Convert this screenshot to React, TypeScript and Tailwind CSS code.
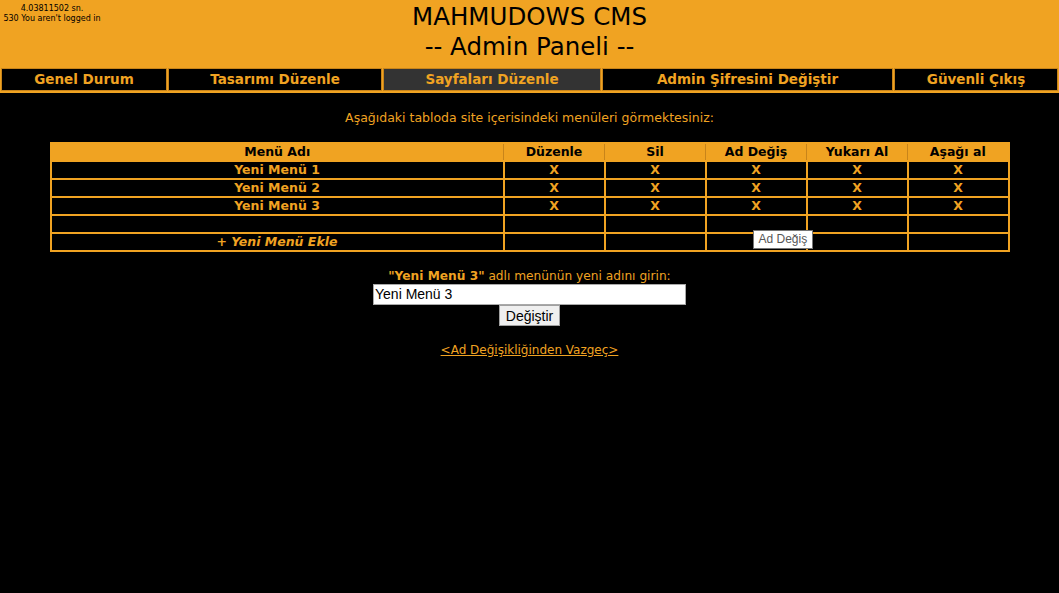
import React from 'react';

const font = "font-['DejaVu_Sans',sans-serif]";

const navItems = [
  { label: 'Genel Durum', w: 'w-[166px]' },
  { label: 'Tasarımı Düzenle', w: 'w-[214px]' },
  { label: 'Sayfaları Düzenle', w: 'w-[218px]', active: true },
  { label: 'Admin Şifresini Değiştir', w: 'w-[291px]' },
  { label: 'Güvenli Çıkış', w: 'flex-1' },
];

const menus = ['Yeni Menü 1', 'Yeni Menü 2', 'Yeni Menü 3'];
const cols = ['Düzenle', 'Sil', 'Ad Değiş', 'Yukarı Al', 'Aşağı al'];

export default function App() {
  return (
    <div className={`min-h-[593px] w-full bg-black text-[#f0a322] ${font}`}>
      {/* BAŞLIK */}
      <div className="relative bg-[#f0a322] h-[68px] text-black">
        <div className="absolute left-0 top-[4px] w-[104px] text-[8px] leading-[10px] text-center">
          <div>4.03811502 sn.</div>
          <div className="whitespace-nowrap">530 You aren't logged in</div>
        </div>
        <div className="flex flex-col items-center pt-[2px] text-[24.5px] leading-[30px]">
          <div>MAHMUDOWS CMS</div>
          <div>-- Admin Paneli --</div>
        </div>
      </div>

      {/* MENÜ */}
      <div className="flex bg-[#f0a322] px-[1px] pb-[2px] gap-[1px]">
        {navItems.map((n) => (
          <div
            key={n.label}
            className={`${n.w} h-[23px] flex items-center justify-center border border-[#c8841a] font-bold text-[13.5px] ${n.active ? 'bg-[#333333]' : 'bg-black'}`}
          >
            {n.label}
          </div>
        ))}
      </div>

      {/* İÇERİK */}
      <div className="flex flex-col items-center">
        <p className="mt-[17px] text-[12.5px] leading-[16px]">
          Aşağıdaki tabloda site içerisindeki menüleri görmektesiniz:
        </p>

        <div className="relative mt-[16px]">
          <table className="w-[960px] table-fixed border-collapse border-2 border-[#f0a322] text-[12.5px] leading-[16px] font-bold text-center">
            <colgroup>
              <col className="w-[453px]" />
              <col className="w-[101px]" />
              <col className="w-[101px]" />
              <col className="w-[101px]" />
              <col className="w-[101px]" />
              <col className="w-[101px]" />
            </colgroup>
            <thead>
              <tr className="bg-[#f0a322] text-black">
                <td className="border border-[#c8841a] h-[18px]">Menü Adı</td>
                {cols.map((c) => (
                  <td key={c} className="border border-[#c8841a]">{c}</td>
                ))}
              </tr>
            </thead>
            <tbody>
              {menus.map((m) => (
                <tr key={m}>
                  <td className="border-2 border-[#f0a322] h-[18px]">{m}</td>
                  {cols.map((c) => (
                    <td key={c} className="border-2 border-[#f0a322]">X</td>
                  ))}
                </tr>
              ))}
              <tr>
                <td className="border-2 border-[#f0a322] h-[18px]"></td>
                {cols.map((c) => (
                  <td key={c} className="border-2 border-[#f0a322]"></td>
                ))}
              </tr>
              <tr>
                <td className="border-2 border-[#f0a322] h-[18px] italic">+ Yeni Menü Ekle</td>
                {cols.map((c) => (
                  <td key={c} className="border-2 border-[#f0a322]"></td>
                ))}
              </tr>
            </tbody>
          </table>
          <div className="absolute left-[703px] top-[88px] bg-white border border-[#767676] text-[#575757] text-[12px] leading-[17px] px-[5px] font-['Liberation_Sans',sans-serif]">
            Ad Değiş
          </div>
        </div>

        <p className="mt-[16px] text-[12.2px] leading-[16px]">
          <b>"Yeni Menü 3"</b> adlı menünün yeni adını girin:
        </p>
        <input
          defaultValue="Yeni Menü 3"
          className="w-[313px] h-[21px] bg-white border border-[#a9a9a9] text-black text-[14px] px-[1px] font-['Liberation_Sans',sans-serif] outline-none"
        />
        <button className="h-[21px] px-[6px] bg-[#efefef] border border-[#a0a0a0] text-black text-[14px] font-['Liberation_Sans',sans-serif]">
          Değiştir
        </button>
        <a href="#" className="mt-[16px] text-[12px] leading-[16px] underline">
          &lt;Ad Değişikliğinden Vazgeç&gt;
        </a>
      </div>
    </div>
  );
}
